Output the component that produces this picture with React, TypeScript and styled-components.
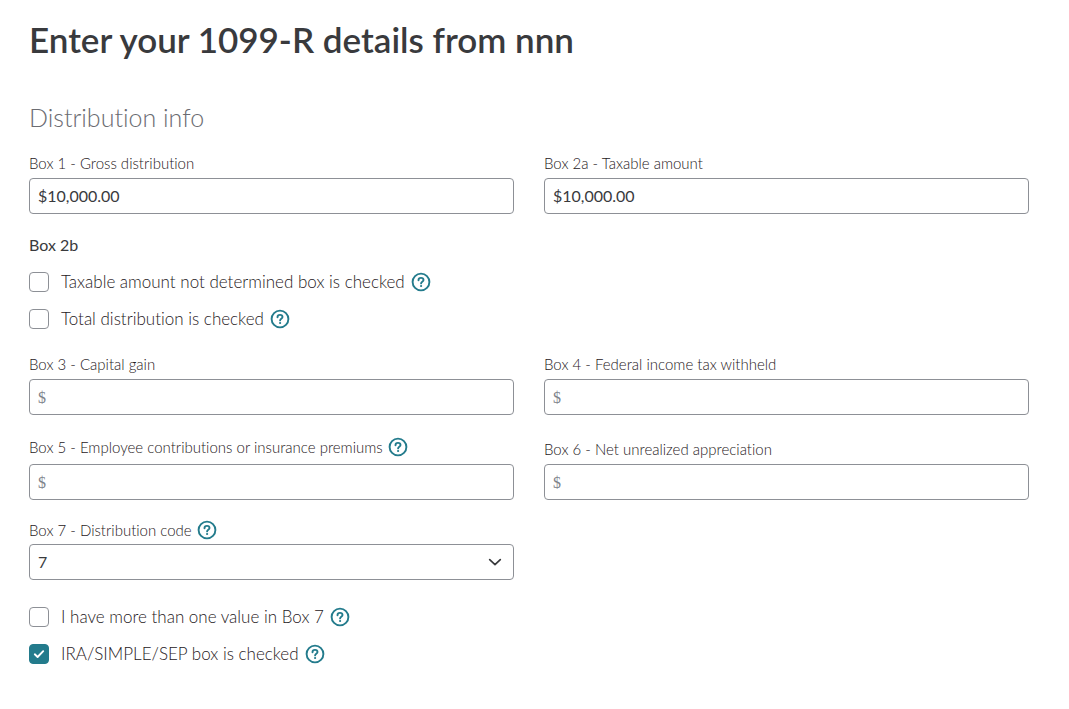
import React, { useId, useState } from "react";
import styled, { createGlobalStyle } from "styled-components";

const GlobalStyle = createGlobalStyle`
  *, *::before, *::after { box-sizing: border-box; }
  body {
    margin: 0;
    background: #ffffff;
    color: #393a3d;
    font-family: Lato, "Open Sans", sans-serif;
    font-size: 16px;
    font-variant-ligatures: none;
  }
`;

const Page = styled.main`
  padding: 17px 40px 40px 29px;
`;

const Title = styled.h1`
  margin: 0;
  font-size: 35px;
  line-height: 44px;
  font-weight: 600;
`;

const SectionTitle = styled.h2`
  margin: 40px 0 20px;
  font-size: 25px;
  line-height: 32px;
  font-weight: 300;
  color: #6b6c72;
`;

const Columns = styled.div<{ $top?: number }>`
  display: grid;
  grid-template-columns: 1fr 1fr;
  column-gap: 30px;
  align-items: end;
  margin-top: ${(p) => p.$top ?? 0}px;
`;

const FieldBox = styled.div<{ $gap: number }>`
  display: flex;
  flex-direction: column;
  gap: ${(p) => p.$gap}px;
`;

const LabelRow = styled.div<{ $tall?: boolean }>`
  display: flex;
  align-items: center;
  gap: 5px;
  height: ${(p) => (p.$tall ? 24 : 20)}px;
`;

const Label = styled.label`
  font-size: 15px;
  line-height: 20px;
  font-weight: 300;
  color: #1f2023;
`;

const TextInput = styled.input`
  width: 100%;
  height: 36px;
  padding: 0 8px 2px;
  border: 1px solid #8d9096;
  border-radius: 4px;
  background: #ffffff;
  color: #393a3d;
  font-family: inherit;
  font-size: 16px;

  &::placeholder {
    color: #80838a;
    opacity: 1;
    font-family: "Liberation Serif", serif;
  }
`;

const SelectWrap = styled.div`
  display: grid;
  align-items: center;

  > * { grid-area: 1 / 1; }
  > svg {
    justify-self: end;
    margin-right: 12px;
    pointer-events: none;
  }
`;

const Select = styled.select`
  appearance: none;
  width: 100%;
  height: 36px;
  padding: 0 36px 2px 8px;
  border: 1px solid #8d9096;
  border-radius: 4px;
  background: #ffffff;
  color: #393a3d;
  font-family: inherit;
  font-size: 16px;
`;

const Group = styled.fieldset<{ $top: number }>`
  display: flex;
  flex-direction: column;
  gap: 13px;
  min-width: 0;
  margin: ${(p) => p.$top}px 0 0;
  padding: 0;
  border: 0;
`;

const Legend = styled.legend`
  padding: 0;
  margin-bottom: 13px;
  font-size: 16px;
  line-height: 24px;
`;

const CheckRow = styled.div`
  display: flex;
  align-items: center;
  height: 24px;
`;

const CheckMark = styled.span`
  display: grid;
  place-items: center;
  width: 20px;
  height: 20px;

  > * { grid-area: 1 / 1; }
  > svg { pointer-events: none; }
`;

const Checkbox = styled.input`
  appearance: none;
  width: 20px;
  height: 20px;
  margin: 0;
  border: 1px solid #8d9096;
  border-radius: 4px;
  background: #ffffff;

  &:checked {
    border-color: #237b8c;
    background: #237b8c;
  }
`;

const CheckLabel = styled.label`
  padding: 0 6px 0 12px;
  font-size: 17px;
  line-height: 24px;
  font-weight: 300;
  color: #1f2023;
`;

const HelpButton = styled.button`
  display: flex;
  padding: 0;
  border: 0;
  background: none;
  color: #237b8c;
  cursor: pointer;
`;

function Help({ about }: { about: string }) {
  return (
    <HelpButton type="button" aria-label={`Help: ${about}`}>
      <svg width="20" height="20" viewBox="0 0 20 20" fill="none" stroke="currentColor" aria-hidden="true">
        <circle cx="10" cy="10" r="8.4" strokeWidth="1.9" />
        <path d="M7.5 8.2C7.5 6.7 8.6 5.9 10 5.9C11.5 5.9 12.5 6.8 12.5 8C12.5 9.7 10.1 9.8 10.1 11.4" strokeWidth="1.9" strokeLinecap="round" />
        <circle cx="10.1" cy="14" r="1.1" fill="currentColor" stroke="none" />
      </svg>
    </HelpButton>
  );
}

function MoneyField({ label, value = "", help }: { label: string; value?: string; help?: boolean }) {
  const id = useId();
  return (
    <FieldBox $gap={5}>
      <LabelRow $tall={help}>
        <Label htmlFor={id}>{label}</Label>
        {help && <Help about={label} />}
      </LabelRow>
      <TextInput id={id} type="text" inputMode="decimal" placeholder="$" defaultValue={value} />
    </FieldBox>
  );
}

function CodeField({ label }: { label: string }) {
  const id = useId();
  return (
    <FieldBox $gap={2}>
      <LabelRow $tall>
        <Label htmlFor={id}>{label}</Label>
        <Help about={label} />
      </LabelRow>
      <SelectWrap>
        <Select id={id} defaultValue="7">
          {["1", "2", "3", "4", "5", "6", "7", "8", "9"].map((code) => (
            <option key={code}>{code}</option>
          ))}
        </Select>
        <svg width="14" height="14" viewBox="0 0 14 14" fill="none" stroke="#393a3d" strokeWidth="1.7" strokeLinecap="round" strokeLinejoin="round" aria-hidden="true">
          <path d="M1.7 4.7L7 9.7L12.3 4.7" />
        </svg>
      </SelectWrap>
    </FieldBox>
  );
}

function CheckField({ label, initial = false }: { label: string; initial?: boolean }) {
  const id = useId();
  const [checked, setChecked] = useState(initial);
  return (
    <CheckRow>
      <CheckMark>
        <Checkbox id={id} type="checkbox" checked={checked} onChange={(e) => setChecked(e.target.checked)} />
        {checked && (
          <svg width="20" height="20" viewBox="0 0 20 20" fill="none" stroke="#ffffff" strokeWidth="1.9" strokeLinecap="round" strokeLinejoin="round" aria-hidden="true">
            <path d="M5.8 10.3L8.6 13L14.2 7.2" />
          </svg>
        )}
      </CheckMark>
      <CheckLabel htmlFor={id}>{label}</CheckLabel>
      <Help about={label} />
    </CheckRow>
  );
}

export default function App() {
  return (
    <>
      <GlobalStyle />
      <Page>
        <Title>Enter your 1099-R details from nnn</Title>
        <SectionTitle>Distribution info</SectionTitle>
        <form>
          <Columns>
            <MoneyField label="Box 1 - Gross distribution" value="$10,000.00" />
            <MoneyField label="Box 2a - Taxable amount" value="$10,000.00" />
          </Columns>
          <Group $top={19}>
            <Legend>Box 2b</Legend>
            <CheckField label="Taxable amount not determined box is checked" />
            <CheckField label="Total distribution is checked" />
          </Group>
          <Columns $top={23}>
            <MoneyField label="Box 3 - Capital gain" />
            <MoneyField label="Box 4 - Federal income tax withheld" />
          </Columns>
          <Columns $top={20}>
            <MoneyField label="Box 5 - Employee contributions or insurance premiums" help />
            <MoneyField label="Box 6 - Net unrealized appreciation" />
          </Columns>
          <Columns $top={18}>
            <CodeField label="Box 7 - Distribution code" />
          </Columns>
          <Group $top={25} aria-label="Box 7 options">
            <CheckField label="I have more than one value in Box 7" />
            <CheckField label="IRA/SIMPLE/SEP box is checked" initial />
          </Group>
        </form>
      </Page>
    </>
  );
}
